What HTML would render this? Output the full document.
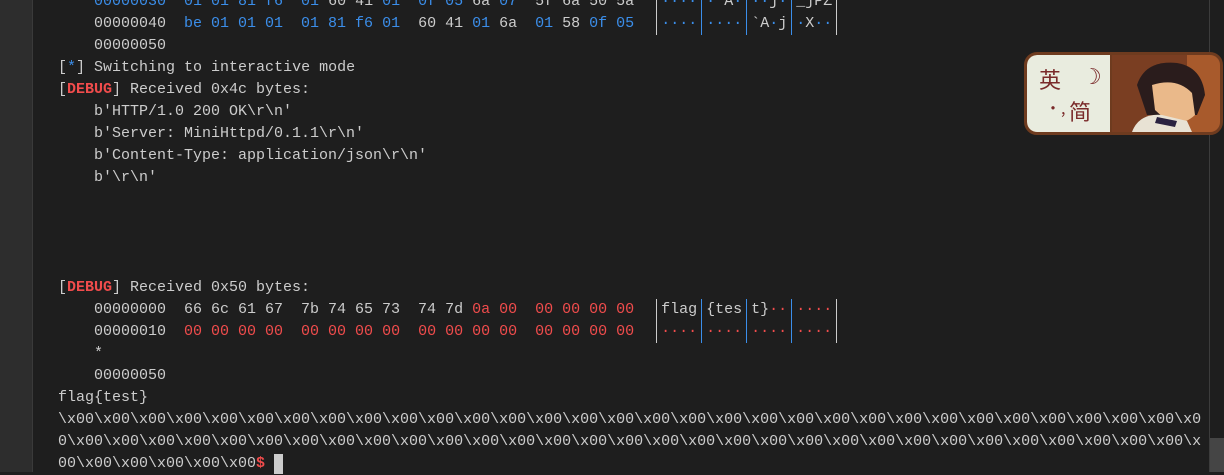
<!DOCTYPE html>
<html><head><meta charset="utf-8"><style>
html,body{margin:0;padding:0;}
body{width:1224px;height:472px;overflow:hidden;background:#1e1e1e;position:relative;font-family:"Liberation Mono",monospace;font-size:15px;color:#cccccc;}
.gut{position:absolute;left:0;top:0;width:32px;height:472px;background:#2d2d2d;border-right:1px solid #3a3a3a;}
.term{position:absolute;left:58px;top:-9px;white-space:pre;line-height:22px;}
.b{color:#3b8eea}.r{color:#f14c4c}.d{color:#f14c4c;font-weight:bold}
.v{display:inline-block;width:9px;height:22px;vertical-align:top;background:linear-gradient(#3b8eea,#3b8eea) no-repeat 4px 0/1px 22px;}
.w{display:inline-block;width:9px;height:22px;vertical-align:top;background:linear-gradient(#cccccc,#cccccc) no-repeat 4px 0/1px 22px;}
.cur{display:inline-block;width:9px;height:20px;background:#cccccc;vertical-align:top;margin-top:1px}
.sep{position:absolute;left:1209px;top:0;width:1px;height:472px;background:#3c3c3c}
.thumb{position:absolute;left:1210px;top:438px;width:14px;height:34px;background:#454545}
.badge{position:absolute;left:1024px;top:52px;width:193px;height:77px;border:3px solid #6e3b1f;border-radius:13px;overflow:hidden;background:#8a4a2a}
.lp{position:absolute;left:0;top:0;width:83px;height:77px;background:#e9ecdf;border-right:2px solid #6e3b1f;border-radius:10px 0 0 10px;font-family:"Noto Sans CJK SC",sans-serif;color:#7a2a2a;font-size:22px}
</style></head><body>
<div class="gut"></div>
<div class="term">    <span class="b">00000030  01 01 81 f6  01</span> 60 41 <span class="b">01  0f 05</span> 6a <span class="b">07</span>  5f 6a 50 5a  <span class="w"></span><span class="b">····</span><span class="v"></span><span class="b">·</span>`A<span class="b">·</span><span class="v"></span><span class="b">··</span>j<span class="b">·</span><span class="v"></span>_jPZ<span class="w"></span>
    00000040  <span class="b">be 01 01 01  01 81 f6 01</span>  60 41 <span class="b">01</span> 6a  <span class="b">01</span> 58 <span class="b">0f 05</span>  <span class="w"></span><span class="b">····</span><span class="v"></span><span class="b">····</span><span class="v"></span>`A<span class="b">·</span>j<span class="v"></span><span class="b">·</span>X<span class="b">··</span><span class="w"></span>
    00000050
[<span class="b">*</span>] Switching to interactive mode
[<span class="d">DEBUG</span>] Received 0x4c bytes:
    b'HTTP/1.0 200 OK\r\n'
    b'Server: MiniHttpd/0.1.1\r\n'
    b'Content-Type: application/json\r\n'
    b'\r\n'




[<span class="d">DEBUG</span>] Received 0x50 bytes:
    00000000  66 6c 61 67  7b 74 65 73  74 7d <span class="r">0a 00  00 00 00 00</span>  <span class="w"></span>flag<span class="v"></span>{tes<span class="v"></span>t}<span class="r">··</span><span class="v"></span><span class="r">····</span><span class="w"></span>
    00000010  <span class="r">00 00 00 00  00 00 00 00  00 00 00 00  00 00 00 00</span>  <span class="w"></span><span class="r">····</span><span class="v"></span><span class="r">····</span><span class="v"></span><span class="r">····</span><span class="v"></span><span class="r">····</span><span class="w"></span>
    *
    00000050
flag{test}
\x00\x00\x00\x00\x00\x00\x00\x00\x00\x00\x00\x00\x00\x00\x00\x00\x00\x00\x00\x00\x00\x00\x00\x00\x00\x00\x00\x00\x00\x00\x00\x0
0\x00\x00\x00\x00\x00\x00\x00\x00\x00\x00\x00\x00\x00\x00\x00\x00\x00\x00\x00\x00\x00\x00\x00\x00\x00\x00\x00\x00\x00\x00\x00\x
00\x00\x00\x00\x00\x00<span class="d">$</span> <span class="cur"></span></div>
<div class="sep"></div>
<div class="thumb"></div>
<div class="badge">
<svg width="193" height="77" style="position:absolute;left:0;top:0">
<rect x="85" y="0" width="108" height="77" fill="#7a3e22"/>
<rect x="160" y="0" width="33" height="77" fill="#a85a2c"/>
<path d="M110 30 Q118 5 150 8 Q175 12 178 40 L170 60 L120 60 Z" fill="#2a1c1c"/>
<path d="M125 30 Q150 22 165 38 L168 60 Q155 72 140 66 L128 55 Z" fill="#eab98a"/>
<path d="M105 77 Q112 58 135 60 L160 66 L165 77 Z" fill="#e8e2d4"/>
<path d="M130 62 L150 66 L148 72 L128 68 Z" fill="#2a2240"/>
</svg>
<div class="lp"><span style="position:absolute;left:12px;top:8px">英</span><span style="position:absolute;left:55px;top:4px;font-size:22px">☽</span><span style="position:absolute;left:18px;top:40px;font-size:16px">•,</span><span style="position:absolute;left:42px;top:40px">简</span></div>
</div>
</body></html>
